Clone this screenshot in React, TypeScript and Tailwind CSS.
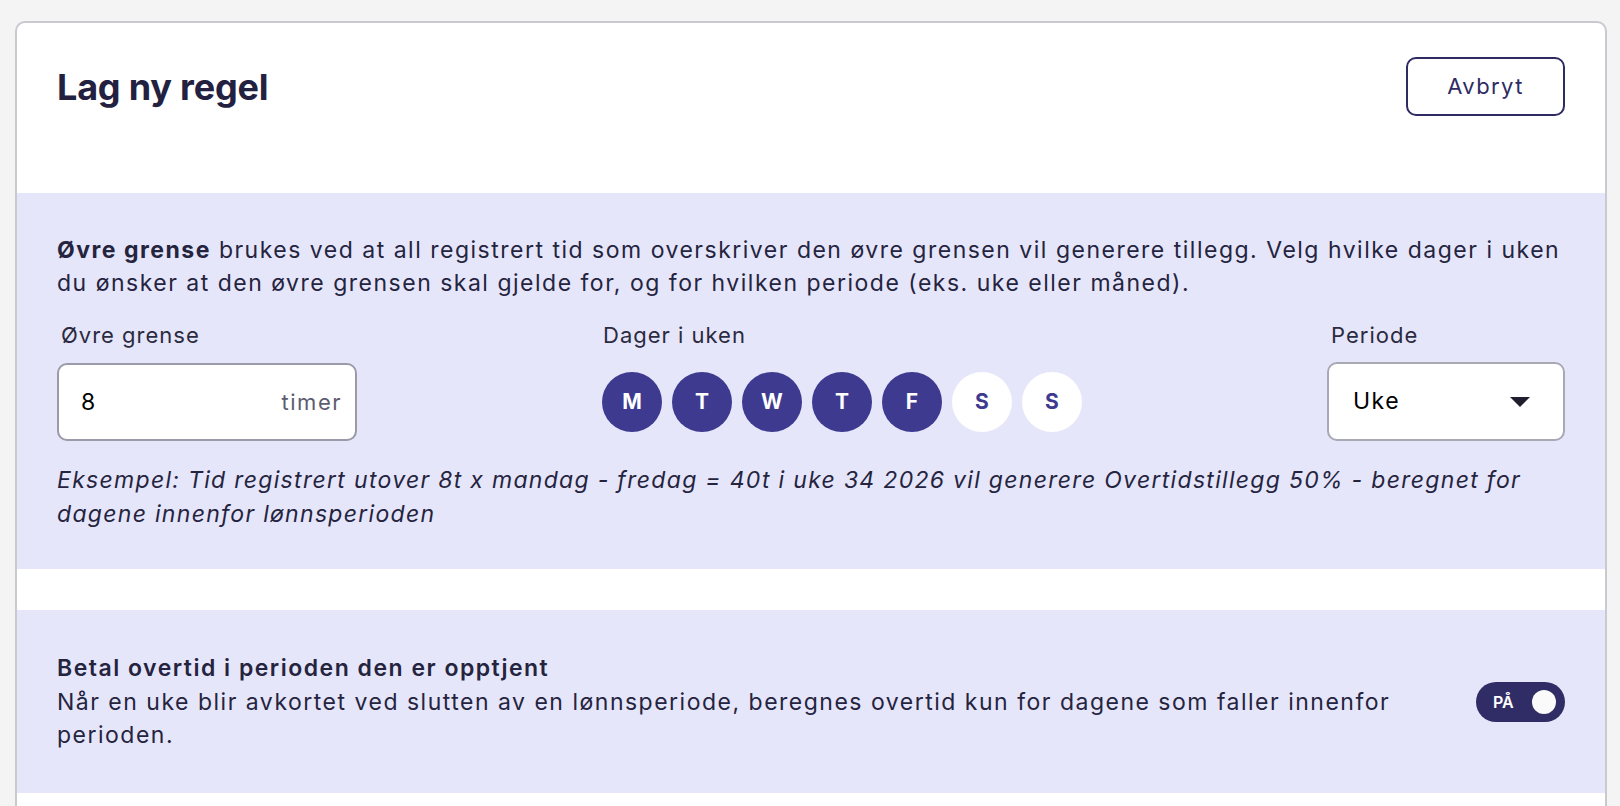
import React, { useState } from 'react';

const days = [
	{ key: 'mon', label: 'M', on: true },
	{ key: 'tue', label: 'T', on: true },
	{ key: 'wed', label: 'W', on: true },
	{ key: 'thu', label: 'T', on: true },
	{ key: 'fri', label: 'F', on: true },
	{ key: 'sat', label: 'S', on: false },
	{ key: 'sun', label: 'S', on: false },
];

const DayPicker: React.FC = () => {
	const [selected, setSelected] = useState(days.map(d => d.on));

	return (
		<div className="flex gap-[10px]">
			{days.map((day, i) => (
				<button
					key={day.key}
					type="button"
					onClick={() => setSelected(s => s.map((v, j) => (j === i ? !v : v)))}
					className={`w-[60px] h-[60px] rounded-full flex items-center justify-center text-[21px] font-bold ${
						selected[i] ? 'bg-[#3d3a8f] text-white' : 'bg-white text-[#3d3a8f]'
					}`}
				>
					{day.label}
				</button>
			))}
		</div>
	);
};

const Toggle: React.FC = () => {
	const [on, setOn] = useState(true);

	return (
		<button
			type="button"
			onClick={() => setOn(!on)}
			className="w-[89px] h-[40px] rounded-full bg-[#302d66] flex items-center justify-between pl-[17px] pr-[9px] shrink-0"
		>
			<span className="text-white text-[16px] font-semibold leading-none">{on ? 'PÅ' : 'AV'}</span>
			<span className="w-[24px] h-[24px] rounded-full bg-[#fafafa]" />
		</button>
	);
};

export default function App() {
	const [limit, setLimit] = useState('8');

	return (
		<div
			className="min-h-screen bg-[#f4f4f4] pt-[21px] pl-[15px] pr-[13px] text-[#25243f]"
			style={{ fontFamily: 'Inter, "Noto Sans", sans-serif' }}
		>
			<div className="bg-white border-2 border-[#c9c9d1] rounded-[10px] overflow-hidden">
				{/* header */}
				<div className="h-[170px] flex items-start justify-between px-[40px] pt-[34px]">
					<h1 className="h-[59px] flex items-center text-[36px] font-bold text-[#22213f] tracking-[-0.2px]">
						Lag ny regel
					</h1>
					<button
						type="button"
						className="w-[159px] h-[59px] border-2 border-[#2e2b63] rounded-[10px] text-[22px] tracking-[1.4px] text-[#2e2b63]"
					>
						Avbryt
					</button>
				</div>

				{/* upper limit */}
				<div className="bg-[#e6e6fa] px-[40px] pt-[41px] pb-[38px] text-[23px] tracking-[1.5px]">
					<p className="leading-[33px] mb-[20px]">
						<span className="font-bold">Øvre grense</span> brukes ved at all registrert tid som overskriver den øvre
						grensen vil generere tillegg. Velg hvilke dager i uken du ønsker at den øvre grensen skal gjelde for, og for
						hvilken periode (eks. uke eller måned).
					</p>

					<div className="flex justify-between">
						<div className="w-[300px]">
							<div className="h-[30px] mb-[13px] pl-[4px] text-[22px] tracking-[1px] leading-[30px] text-[#2b2a40]">
								Øvre grense
							</div>
							<label className="h-[78px] bg-white border-2 border-[#9a9aa8] rounded-[10px] flex items-center pl-[22px] pr-[13px]">
								<input
									value={limit}
									onChange={e => setLimit(e.target.value)}
									className="flex-1 min-w-0 bg-transparent outline-none text-[23px] text-black"
								/>
								<span className="text-[22px] tracking-[1.5px] text-[#5d5c70]">timer</span>
							</label>
						</div>

						<div className="w-[480px]">
							<div className="h-[30px] mb-[13px] pl-[1px] text-[22px] tracking-[1px] leading-[30px] text-[#2b2a40]">
								Dager i uken
							</div>
							<div className="h-[78px] flex items-center tracking-normal">
								<DayPicker />
							</div>
						</div>

						<div className="w-[238px]">
							<div className="h-[30px] mb-[12px] pl-[4px] text-[22px] tracking-[1px] leading-[30px] text-[#2b2a40]">
								Periode
							</div>
							<div className="h-[79px] bg-white border-2 border-[#a9a9b5] rounded-[10px] flex items-center justify-between pl-[24px] pr-[33px]">
								<span className="text-[23px] tracking-[1.5px] text-black">Uke</span>
								<svg width="20" height="10" viewBox="0 0 20 10" className="text-[#1e1e2e]">
									<path d="M0 0 L20 0 L10 10 Z" fill="currentColor" />
								</svg>
							</div>
						</div>
					</div>

					<p className="mt-[22px] leading-[34px] italic tracking-[1.3px]">
						Eksempel: Tid registrert utover 8t x mandag - fredag = 40t i uke 34 2026 vil generere Overtidstillegg 50% -
						beregnet for dagene innenfor lønnsperioden
					</p>
				</div>

				<div className="h-[41px]" />

				{/* pay overtime in earned period */}
				<div className="bg-[#e6e6fa] px-[40px] pt-[42px] pb-[40px] flex items-center gap-[80px]">
					<div className="flex-1 text-[23px] tracking-[1.5px] leading-[33.5px]">
						<div className="font-semibold">Betal overtid i perioden den er opptjent</div>
						<div>
							Når en uke blir avkortet ved slutten av en lønnsperiode, beregnes overtid kun for dagene som faller innenfor
							perioden.
						</div>
					</div>
					<Toggle />
				</div>

				<div className="h-[80px]" />
			</div>
		</div>
	);
}
